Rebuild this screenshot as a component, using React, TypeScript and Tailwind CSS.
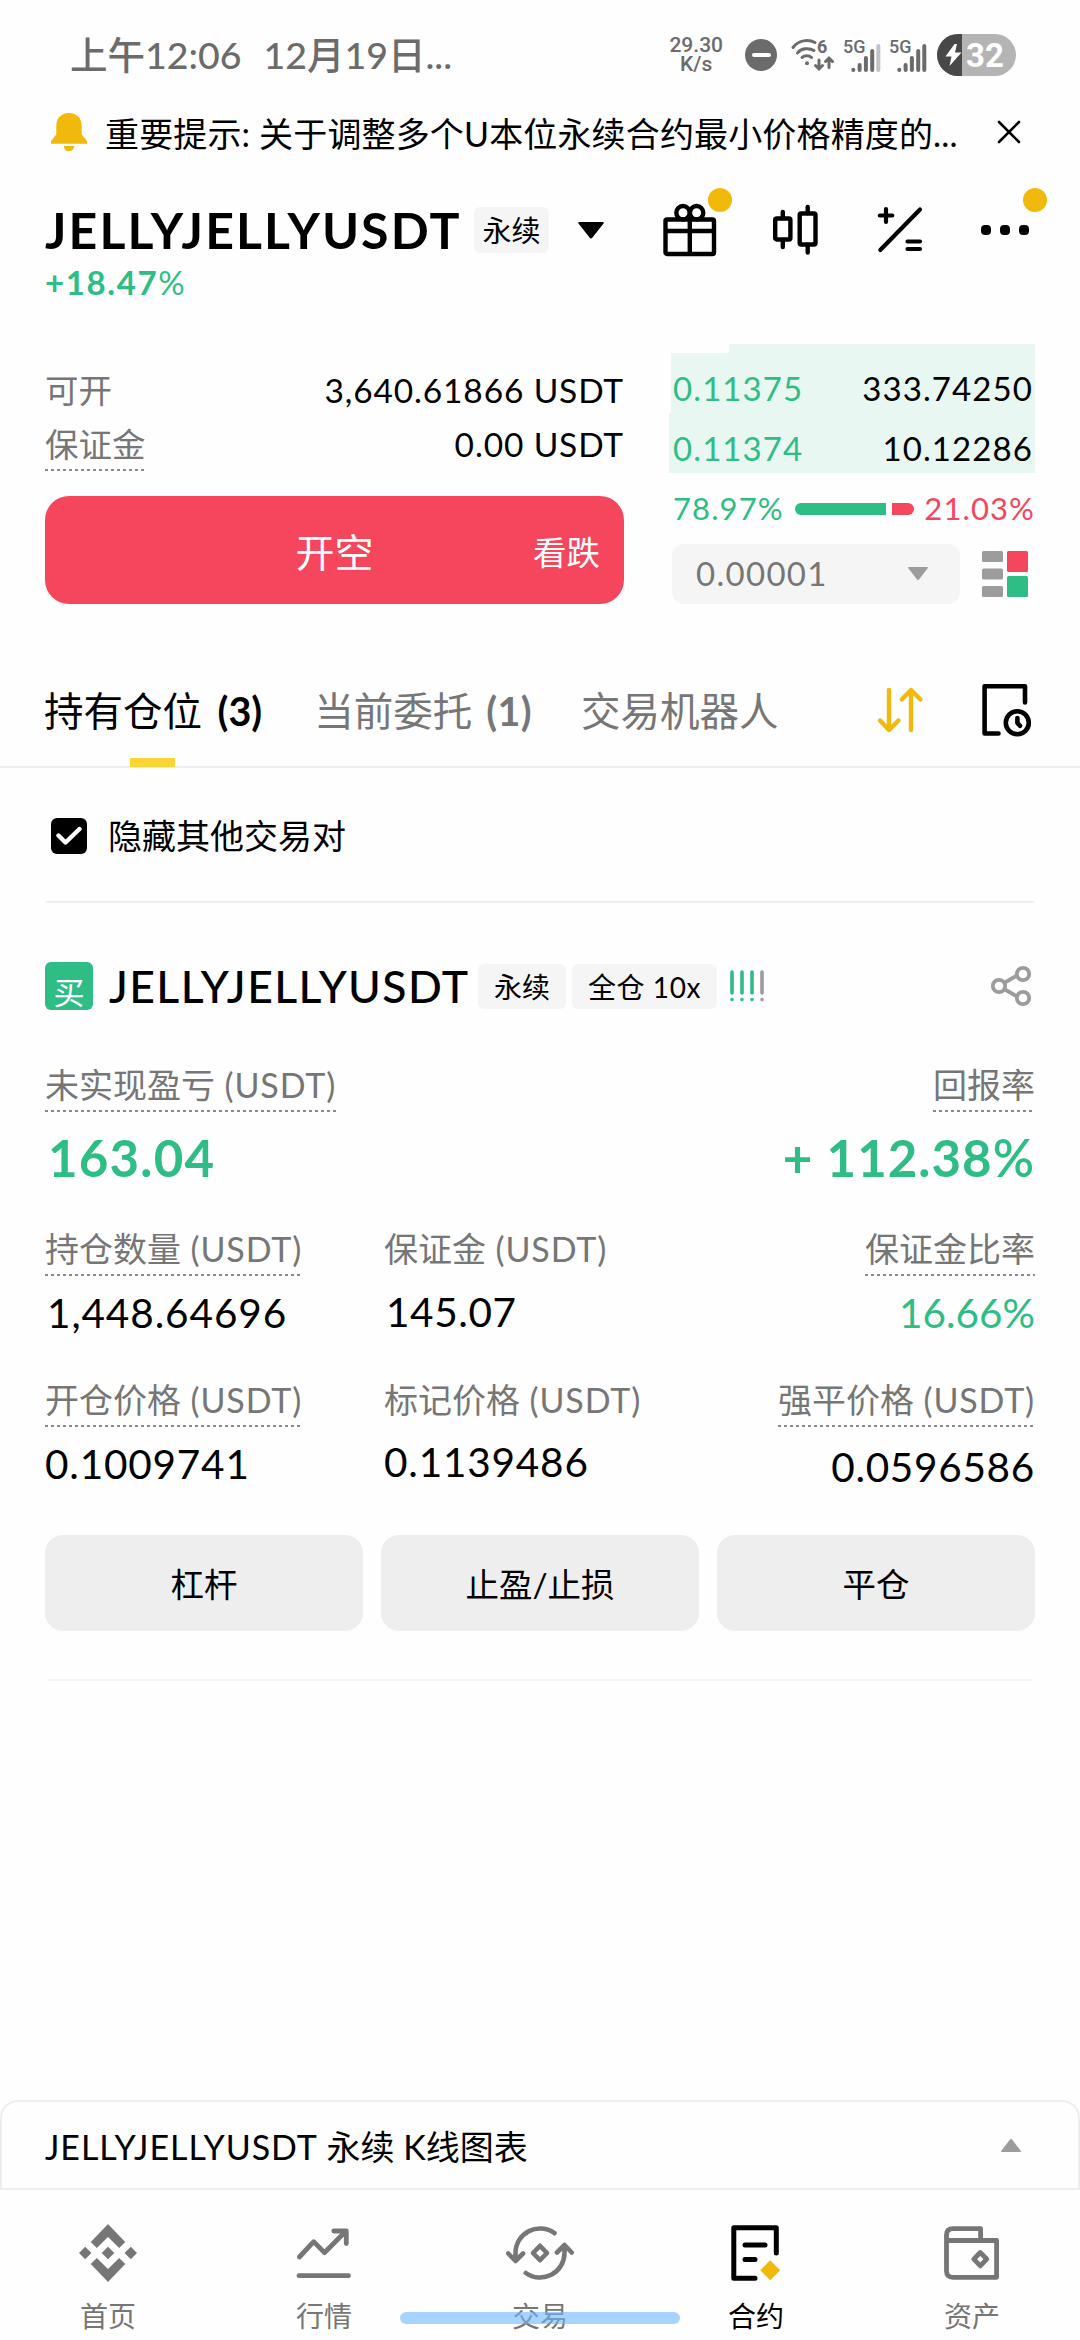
import type { ReactNode } from "react";
import clsx from "clsx";

const SANS = "font-['Lato','Noto_Sans_CJK_SC',sans-serif]";

interface Stat {
  label: string;
  unit?: string;
  value: string;
  underline?: boolean;
  valueClass?: string;
}

const stats: Stat[] = [
  {
    label: "持仓数量",
    unit: "(USDT)",
    value: "1,448.64696",
    underline: true,
    valueClass: "mt-3 pl-0.5 tracking-[0.9px]",
  },
  { label: "保证金", unit: "(USDT)", value: "145.07", valueClass: "mt-[11px] pl-0.5 tracking-[0.6px]" },
  {
    label: "保证金比率",
    value: "16.66%",
    underline: true,
    valueClass: "mt-3 text-[#2ebd85]",
  },
  {
    label: "开仓价格",
    unit: "(USDT)",
    value: "0.1009741",
    underline: true,
    valueClass: "mt-3 tracking-[0.8px]",
  },
  { label: "标记价格", unit: "(USDT)", value: "0.1139486", valueClass: "mt-2.5 tracking-[0.8px]" },
  {
    label: "强平价格",
    unit: "(USDT)",
    value: "0.0596586",
    underline: true,
    valueClass: "mt-[15px] tracking-[0.7px]",
  },
];

function Signal({ weak }: { weak?: boolean }) {
  return (
    <svg className="overflow-visible" width="40" height="38" viewBox="0 -2 40 38" fill="none" stroke="#6b6b6b" strokeWidth="4" strokeLinecap="round">
      <text x="0" y="14.500" fontSize="18" fontWeight="500" fill="#6b6b6b" stroke="none" className="font-['Roboto',sans-serif]">
        5G
      </text>
      <path d="M10.3 32v-.2M16.6 32v-5M22.9 32V20M29.2 32V13" />
      <path d="M35.3 32V8" opacity={weak ? 0.4 : 1} />
    </svg>
  );
}

function StatusBar() {
  return (
    <div className="flex h-28 items-center pl-[70px] pr-16 pb-0.5 text-[#6b6b6b]">
      <div className="flex gap-[22px] text-[37.5px] leading-none font-medium whitespace-nowrap">
        <span>上午12:06</span>
        <span>12月19日...</span>
      </div>
      <div className="ml-auto flex items-center">
        <div className="flex flex-col items-center font-['Roboto',sans-serif] text-[21px] leading-[19px] font-medium">
          <span>29.30</span>
          <span>K/s</span>
        </div>
        <div className="ml-[22px] flex size-8 items-center justify-center rounded-full bg-[#6b6b6b]">
          <div className="h-1 w-[19px] rounded-full bg-white" />
        </div>
        <svg className="ml-3" width="48" height="38" viewBox="0 0 48 38" fill="none" stroke="#6b6b6b" strokeWidth="3" strokeLinecap="round">
          <path d="M4 11.500C9.500 4 19.500 3 26 6.500M8.500 17C12 12 20 11.500 25 14.500M13 21.500C15.500 19 20 19 22.500 21.500" />
          <circle cx="18" cy="27.300" r="2" fill="#6b6b6b" stroke="none" />
          <path d="M30 24v8.500M26.500 29.500l3.500 3.500 3.500-3.500M40 31.500v-8.500M36.500 25.500l3.500-3.500 3.500 3.500" />
          <text x="28" y="17" fontSize="18" fontWeight="700" fill="#6b6b6b" stroke="none" className="font-['Roboto',sans-serif]">
            6
          </text>
        </svg>
        <div className="ml-1.5 flex gap-1.5">
          <Signal weak />
          <Signal />
        </div>
        <div className="ml-2 flex h-[42px] w-[79px] overflow-hidden rounded-full bg-[#b4b4b4]">
          <div className="flex w-[25px] shrink-0 items-center justify-end bg-[#484848]">
            <svg width="17" height="24" viewBox="0 0 17 24" fill="#fff">
              <path d="M9.500 1 0.500 13.500h6L4.500 23 16.500 9.500H10L12 1z" />
            </svg>
          </div>
          <span className="pl-1 font-['Roboto',sans-serif] text-[33px] leading-[43px] font-bold text-white">32</span>
        </div>
      </div>
    </div>
  );
}

function Notice() {
  return (
    <div className="flex h-[45px] items-center pr-[59px] pl-[51px]">
      <svg className="-mt-1.5" width="36" height="38" viewBox="0 0 36 38" fill="#f0b90b">
        <path d="M18 0C10 0 5.300 5.500 5.300 13v8.500L0 28v2.700h36V28l-5.300-6.500V13C30.700 5.500 26 0 18 0z" />
        <path d="M12.800 33h10.400a5.200 5.200 0 0 1-10.400 0z" />
      </svg>
      <p className="-mt-0.5 ml-[18px] text-[34px] leading-[45px] tracking-[0.15px] whitespace-nowrap">
        重要提示: 关于调整多个U本位永续合约最小价格精度的...
      </p>
      <svg className="-mt-1.5 ml-auto" width="24" height="24" viewBox="0 0 24 24" stroke="#000" strokeWidth="2.600" strokeLinecap="round">
        <path d="M2 2l20 20M22 2L2 22" />
      </svg>
    </div>
  );
}

function Badge({ className }: { className?: string }) {
  return <span className={clsx("absolute size-6 rounded-full bg-[#f0b90b]", className)} />;
}

function Header() {
  return (
    <div className="mt-[50px] pr-[51px] pl-[45px]">
      <div className="flex h-[46px] items-center">
        <h1 className="w-[416px] text-[50px] leading-[46px] font-bold tracking-[2.1px] whitespace-nowrap">JELLYJELLYUSDT</h1>
        <span className="ml-[13px] h-[46px] w-[75px] rounded-md bg-[#f5f5f5] text-center text-[29px] leading-[48px]">永续</span>
        <svg className="ml-[29px]" width="26" height="17" viewBox="0 0 26 17">
          <path d="M1.500 0h23q2 0 1 1.500L14.500 15.500q-1.500 2-3 0L.5 1.500Q-.5 0 1.500 0z" />
        </svg>
        <div className="ml-auto flex items-center">
          <div className="relative">
            <svg width="54" height="54" viewBox="0 0 54 54" fill="none" stroke="#000" strokeWidth="4.400">
              <rect x="2.500" y="16.500" width="48.500" height="34.500" rx="1.500" />
              <path d="M2.500 28H51M26.800 15v36" />
              <circle cx="20" cy="9.700" r="6.700" />
              <circle cx="33.600" cy="9.700" r="6.700" />
            </svg>
            <Badge className="-top-[15px] left-[45px]" />
          </div>
          <svg className="ml-[53px]" width="50" height="54" viewBox="0 0 50 54" fill="none" stroke="#000" strokeWidth="4.400" strokeLinecap="round">
            <rect x="5.200" y="15.500" width="15.200" height="21" rx="1.500" />
            <path d="M12.800 9v6M12.800 37v7M37.700 4v6M37.700 42v7.500" />
            <rect x="29.700" y="10.500" width="15.800" height="31" rx="1.500" />
          </svg>
          <svg className="ml-14" width="48" height="50" viewBox="0 0 48 50" fill="none" stroke="#000" strokeWidth="4.200" strokeLinecap="round">
            <path d="M4.300 45L44 4.500M3.800 10.500h12.500M10 4v13M31.500 36.500H44M31.500 44H44" />
          </svg>
          <div className="relative ml-[57px] flex gap-[9px]">
            <span className="size-2.5 rounded-[4px] bg-black" />
            <span className="size-2.5 rounded-[4px] bg-black" />
            <span className="size-2.5 rounded-[4px] bg-black" />
            <Badge className="-top-[37px] left-[42px]" />
          </div>
        </div>
      </div>
      <p className="text-[33px] leading-[59px] font-bold tracking-[1.6px] text-[#2ebd85]">
        +18.47<span className="font-normal">%</span>
      </p>
    </div>
  );
}

/* dotted rule that hangs below the explainable labels */
function Dashes() {
  return <div className="h-0.5 bg-[repeating-linear-gradient(to_right,#8a8a8a_0_3px,transparent_3px_6px)]" />;
}

function Label({ children, unit, underline }: { children: ReactNode; unit?: string; underline?: boolean }) {
  return (
    <div className="h-[52px] w-fit text-[34px] leading-[50px] whitespace-nowrap text-[#767676]">
      {children}
      {unit && <span className="tracking-[0.85px]"> {unit}</span>}
      {underline && <Dashes />}
    </div>
  );
}

function BookRow({ price, amount, className }: { price: string; amount: string; className: string }) {
  return (
    <div className={clsx("flex justify-between bg-[#e8f7f2] pr-0.5 text-[33px] leading-[48px] tracking-[1.1px]", className)}>
      <span className="text-[#2ebd85]">{price}</span>
      <span>{amount}</span>
    </div>
  );
}

function OrderPanel() {
  return (
    <div className="mt-8 flex justify-between px-[45px]">
      <div className="w-[579px] pt-[19px]">
        <div className="flex justify-between text-[33.5px] leading-[54px]">
          <span className="text-[#767676]">可开</span>
          <span className="tracking-[0.85px]">3,640.61866 USDT</span>
        </div>
        <div className="flex h-[54px] justify-between text-[33.5px] leading-[54px]">
          <div className="text-[#767676]">
            <div className="h-[52px]">保证金</div>
            <Dashes />
          </div>
          <span className="tracking-[0.85px]">0.00 USDT</span>
        </div>
        <button className="mt-[25px] grid h-[108px] w-full grid-cols-3 items-center rounded-[24px] bg-[#f6465d] px-6 pt-1 text-white">
          <span />
          <span className="text-[39px]">开空</span>
          <span className="text-right text-[33.5px]">看跌</span>
        </button>
      </div>

      <div className="w-[366px]">
        <div className="relative">
          <BookRow price="0.11375" amount="333.74250" className="ml-0.5 h-[69px] pt-5 pl-0.5" />
          <BookRow price="0.11374" amount="10.12286" className="h-[60px] pt-[11px] pl-1" />
          <div className="absolute top-0 left-0 h-[9px] w-[60px] bg-[#fefefe]" />
        </div>
        <div className="flex h-[71px] items-center justify-between pl-1 text-[31px] tracking-[1.1px]">
          <span className="text-[#2ebd85]">78.97%</span>
          <div className="flex h-3 w-[119px] gap-1.5">
            <div className="w-[91px] rounded-l-full bg-[#2ebd85]" />
            <div className="flex-1 rounded-r-full bg-[#f6465d]" />
          </div>
          <span className="text-[#f6465d]">21.03%</span>
        </div>
        <div className="flex items-center pl-[3px]">
          <div className="flex h-[60px] w-72 items-center justify-between rounded-xl bg-[#f5f5f5] pr-8 pl-6 text-[33px] tracking-[1.3px] text-[#767676]">
            0.00001
            <svg width="20" height="14" viewBox="0 0 20 14" fill="#9c9c9c">
              <path d="M1 0h18q1.500 0 .5 1.500l-8.500 11q-1 1.500-2 0l-8.500-11Q-.5 0 1 0z" />
            </svg>
          </div>
          <svg className="ml-[22px]" width="46" height="46" viewBox="0 0 46 46" fill="#9c9c9c">
            <rect x="0" y="0" width="21" height="11" rx="1.500" />
            <rect x="0" y="17.500" width="21" height="11" rx="1.500" />
            <rect x="0" y="35" width="21" height="11" rx="1.500" />
            <rect x="25" y="0" width="21" height="21" rx="1.500" fill="#f6465d" />
            <rect x="25" y="25" width="21" height="21" rx="1.500" fill="#2ebd85" />
          </svg>
        </div>
      </div>
    </div>
  );
}

function Tabs() {
  return (
    <div className="mt-[50px] flex h-[114px] items-center border-b-2 border-[#eee] pr-[46px] pl-11 text-[39.5px] leading-[112px] whitespace-nowrap text-[#767676]">
      <div className="relative pt-0.5 text-black">
        持有仓位<span className="ml-1.5 font-bold"> (3)</span>
        <span className="absolute bottom-0 left-[86px] h-[9px] w-[45px] bg-[#fcd535]" />
      </div>
      <div className="ml-[52px] pt-0.5">
        当前委托<span className="ml-1 font-bold tracking-[0.4px]"> (1)</span>
      </div>
      <div className="ml-[49px] pt-0.5">交易机器人</div>
      <svg className="ml-auto" width="48" height="48" viewBox="0 0 48 48" fill="none" stroke="#f0b90b" strokeWidth="4.400" strokeLinecap="round" strokeLinejoin="round">
        <path d="M13 4v40M4 34.500l9 9.500 9.500-9.500M35 44V4M25.800 13.500L35 4l9.500 9.500" />
      </svg>
      <svg className="ml-14" width="54" height="56" viewBox="0 0 54 56" fill="none" stroke="#000" strokeWidth="4.600" strokeLinecap="round" strokeLinejoin="round">
        <path d="M18.500 51.500H4.600V4.300H45V20.500" />
        <circle cx="37.300" cy="40.800" r="11.500" />
        <path d="M37.400 36v5l2.600 2.800" />
      </svg>
    </div>
  );
}

function PositionHeader() {
  return (
    <div className="mt-[59px] flex h-12 items-center">
      <span className="h-12 w-12 rounded-md bg-[#2ebd85] pt-1.5 text-center text-[31px] leading-[48px] text-white">买</span>
      <h2 className="ml-4 w-[364px] text-[44.5px] leading-[48px] font-medium tracking-[1.4px] whitespace-nowrap">JELLYJELLYUSDT</h2>
      <span className="ml-[5px] h-[45px] w-[88px] rounded-md bg-[#f5f5f5] text-center text-[28px] leading-[47px]">永续</span>
      <span className="ml-1.5 h-[45px] w-[145px] rounded-md bg-[#f5f5f5] text-center text-[28px] leading-[47px] tracking-[0.6px]">全仓 10x</span>
      <svg className="ml-3" width="36" height="32" viewBox="0 0 36 32" fill="none" stroke="#2ebd85" strokeWidth="3.600" strokeLinecap="round">
        <path d="M3 2v21M3 29.500v.1M13 2v21M13 29.500v.1M23 2v21M23 29.500v.1" />
        <path d="M33 2v21M33 29.500v.1" stroke="#9c9c9c" />
      </svg>
      <svg className="mr-0.5 ml-auto" width="44" height="44" viewBox="0 0 44 44" fill="none" stroke="#9c9c9c" strokeWidth="3.800">
        <path d="M15 19l14-8M15 25l14 8" />
        <circle cx="10" cy="22" r="6.200" />
        <circle cx="34" cy="10" r="6.200" />
        <circle cx="34" cy="34" r="6.200" />
      </svg>
    </div>
  );
}

function Position() {
  return (
    <div className="px-[45px]">
      <PositionHeader />
      <div className="mt-[50px] flex justify-between">
        <Label unit="(USDT)" underline>
          未实现盈亏
        </Label>
        <Label underline>回报率</Label>
      </div>
      <div className="mt-[15px] flex h-[60px] justify-between text-[51px] leading-[62px] font-bold text-[#2ebd85]">
        <span className="pl-[3px] tracking-[1.2px]">163.04</span>
        <span className="tracking-[1px]">
          + 112.38<span className="font-semibold">%</span>
        </span>
      </div>

      <div className="mt-[37px] grid h-[311px] grid-cols-[339px_1fr_auto] grid-rows-[151px_160px]">
        {stats.map((s, i) => (
          <div key={s.label} className={clsx("flex flex-col", i % 3 === 2 && "items-end")}>
            <Label unit={s.unit} underline={s.underline}>
              {s.label}
            </Label>
            <span className={clsx("text-[40.5px] leading-[50px]", s.valueClass)}>{s.value}</span>
          </div>
        ))}
      </div>

      <div className="grid grid-cols-3 gap-[18px]">
        {["杠杆", "止盈/止损", "平仓"].map((t) => (
          <button key={t} className="h-24 rounded-[18px] bg-[#eee] pt-0.5 text-[33.5px]">
            {t}
          </button>
        ))}
      </div>
      <div className="mx-[3px] mt-12 h-0.5 bg-[#f5f5f5]" />
    </div>
  );
}

const navItems = [
  {
    name: "首页",
    icon: (
      <svg width="58" height="58" viewBox="0 0 58 58" fill="#767676">
        <path d="M29 0L46.200 18l-6 6L29 13 17.800 24l-6-6zM29 58L11.800 40l6-6L29 45l11.200-11 6 6zM29 22.700l6.300 6.300-6.300 6.300-6.300-6.300zM6.200 22.700l6.200 6.300-6.200 6.300L0 29zM51.800 22.700L58 29l-6.200 6.300-6.200-6.300z" />
      </svg>
    ),
  },
  {
    name: "行情",
    icon: (
      <svg width="58" height="54" viewBox="0 0 58 54" fill="none" stroke="#767676" strokeWidth="4.800" strokeLinecap="round" strokeLinejoin="round">
        <path d="M4.400 31L18.700 15.700l10.700 11L51 5M38.800 5H51.300V17.500M4 49.700H53.500" />
      </svg>
    ),
  },
  {
    name: "交易",
    icon: (
      <svg width="70" height="58" viewBox="0 0 70 58" fill="none" stroke="#767676" strokeWidth="4.600" strokeLinecap="round" strokeLinejoin="round">
        <path d="M10.500 36V29A24.500 24.500 0 0 1 49.500 9.200M3.300 29.500l7.200 7.500 7.500-7.500M59.500 22v7A24.500 24.500 0 0 1 20.800 49M52 28.500l7.500-7.500 7.200 7.500" />
        <path d="M35 21.800l7 7.200-7 7.200-7-7.200z" />
      </svg>
    ),
  },
  {
    name: "合约",
    active: true,
    icon: (
      <svg width="54" height="60" viewBox="0 0 54 60" fill="none" stroke="#000" strokeWidth="5" strokeLinecap="round" strokeLinejoin="round">
        <path d="M26 55.200H4.800V4.800H47.300V30M16 22H36M16 36.500H26" />
        <path d="M41.200 37.300l10 10-10 10-10-10z" fill="#f0b90b" stroke="none" />
      </svg>
    ),
  },
  {
    name: "资产",
    icon: (
      <svg width="60" height="58" viewBox="0 0 60 58" fill="none" stroke="#767676" strokeWidth="4.800" strokeLinejoin="round">
        <path d="M4.500 16.500H54.600V53.300H11q-6.500 0-6.500-6V11Q4.500 4.600 11 4.600H38.600V16.500" />
        <path d="M38.300 28.500l6.500 6.700-6.500 6.700-6.500-6.700z" />
      </svg>
    ),
  },
];

function BottomNav() {
  return (
    <nav className="relative grid h-[150px] grid-cols-5">
      {navItems.map((n) => (
        <div key={n.name} className={clsx("flex flex-col items-center", n.active ? "text-black" : "text-[#767676]")}>
          <div className="mt-[33px] flex h-[60px] items-center">{n.icon}</div>
          <span className="mt-[13px] text-[28px] leading-[40px]">{n.name}</span>
        </div>
      ))}
      {/* gesture bar */}
      <div className="absolute top-[122px] left-[400px] h-3 w-[280px] rounded-full bg-[#6cb6ff]/60" />
    </nav>
  );
}

export default function App() {
  return (
    <div className={clsx("flex h-[2340px] w-[1080px] flex-col overflow-hidden bg-[#fefefe] text-black", SANS)}>
      <StatusBar />
      <Notice />
      <Header />
      <OrderPanel />
      <Tabs />
      <div className="mx-[46px] flex h-[135px] items-center border-b-2 border-[#eee] pt-[3px] pl-[5px]">
        <span className="flex size-9 items-center justify-center rounded-md bg-black">
          <svg width="26" height="20" viewBox="0 0 26 20" fill="none" stroke="#fff" strokeWidth="4.400" strokeLinecap="round" strokeLinejoin="round">
            <path d="M2.500 9.500l7 7L23.500 3" />
          </svg>
        </span>
        <span className="ml-[21px] text-[34px] leading-none">隐藏其他交易对</span>
      </div>
      <Position />
      <div className="mt-auto flex h-[90px] items-center justify-between rounded-t-[18px] border-2 border-[#eee] pr-[57px] pl-[43px]">
        <span className="pt-1 text-[34px] leading-[82px]">
          <span className="tracking-[0.95px]">JELLYJELLYUSDT</span> 永续 K线图表
        </span>
        <svg width="20" height="14" viewBox="0 0 20 14" fill="#9c9c9c">
          <path d="M1 14h18q1.500 0 .5-1.500l-8.500-11q-1-1.500-2 0l-8.500 11Q-.5 14 1 14z" />
        </svg>
      </div>
      <BottomNav />
    </div>
  );
}
